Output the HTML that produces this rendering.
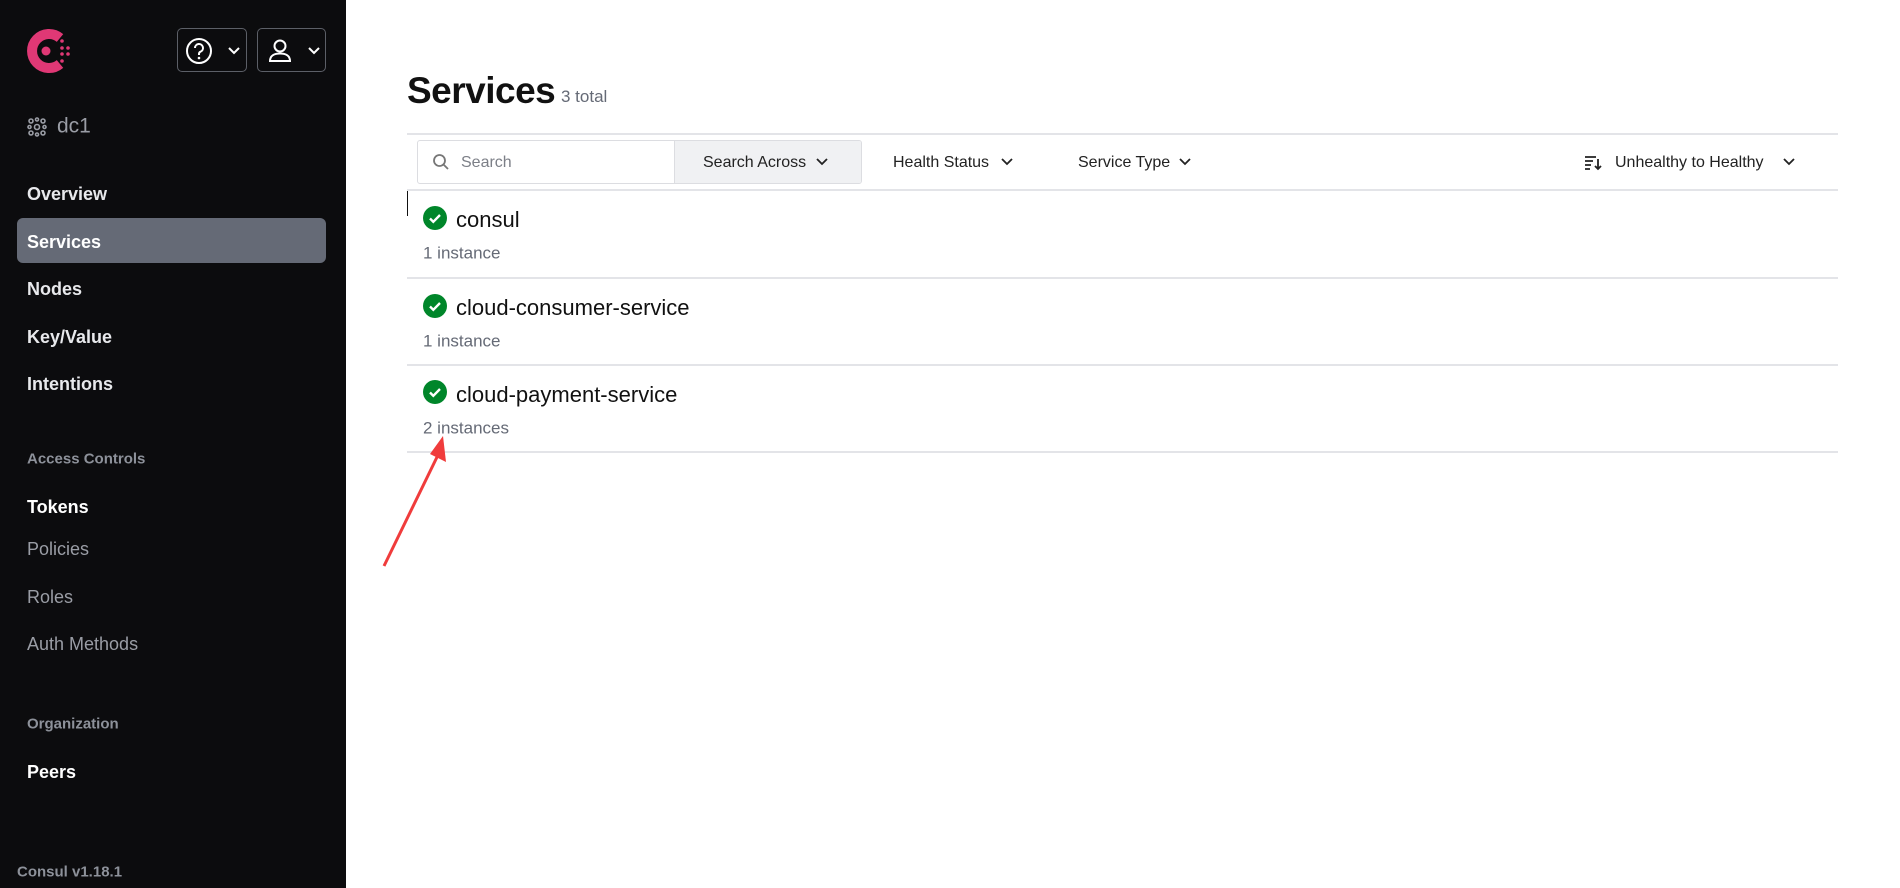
<!DOCTYPE html>
<html><head><meta charset="utf-8"><style>
*{margin:0;padding:0;box-sizing:border-box}
body{width:1900px;height:888px;overflow:hidden;background:#fff;font-family:"Liberation Sans",sans-serif;position:relative}
.sb{position:absolute;left:0;top:0;width:346px;height:888px;background:#0c0c0e}
.a{position:absolute;white-space:nowrap;line-height:1}
.nav{left:27px;font-size:18px;font-weight:bold;color:#e8e9ec;transform:translateY(-50%)}
.grey{font-weight:normal;color:#9a9da5}
.hd{left:27px;font-size:15px;font-weight:bold;color:#8d919a;transform:translateY(-50%)}
.btn{position:absolute;top:28px;height:44px;border:1px solid #5c5f67;border-radius:5px}
.line{position:absolute;left:407px;width:1431px;height:2px;background:#e3e4e8}
.name{left:456px;font-size:22px;color:#111;transform:translateY(-50%)}
.inst{left:423px;font-size:17px;color:#656a76;transform:translateY(-50%)}
.chk{position:absolute;left:423px;width:24px;height:24px}
.flt{font-size:16px;color:#222;transform:translateY(-50%);top:163px}
</style></head><body>
<div class="sb">
<svg style="position:absolute;left:25px;top:28px" width="46" height="46" viewBox="0 0 46 46">
<path d="M35 10 A17 17 0 1 0 35 36" fill="none" stroke="#e03875" stroke-width="10"/>
<circle cx="21" cy="23" r="4.5" fill="#e03875"/>
<g fill="#e03875"><circle cx="37" cy="13" r="1.8"/><circle cx="37" cy="20" r="1.8"/><circle cx="37" cy="26" r="1.8"/><circle cx="37" cy="33" r="1.8"/><circle cx="43" cy="20" r="1.8"/><circle cx="43" cy="26" r="1.8"/></g>
</svg>
<div class="btn" style="left:177px;width:70px">
<svg style="position:absolute;left:7px;top:8px" width="28" height="28" viewBox="0 0 28 28"><circle cx="14" cy="14" r="12" fill="none" stroke="#fff" stroke-width="2"/><path d="M10 11a4 4 0 1 1 5.5 3.7c-1 .4-1.5 1.2-1.5 2.3v1" fill="none" stroke="#fff" stroke-width="2"/><circle cx="14" cy="21" r="1.3" fill="#fff"/></svg>
<svg style="position:absolute;left:49px;top:17px" width="14" height="10" viewBox="0 0 14 10"><path d="M2 2l5 5 5-5" fill="none" stroke="#fff" stroke-width="2"/></svg>
</div>
<div class="btn" style="left:257px;width:69px">
<svg style="position:absolute;left:9px;top:8px" width="26" height="28" viewBox="0 0 26 28"><circle cx="13" cy="9" r="5.5" fill="none" stroke="#fff" stroke-width="2"/><path d="M3 24c0-5 4-7.5 10-7.5s10 2.5 10 7.5z" fill="none" stroke="#fff" stroke-width="2"/></svg>
<svg style="position:absolute;left:49px;top:17px" width="14" height="10" viewBox="0 0 14 10"><path d="M2 2l5 5 5-5" fill="none" stroke="#fff" stroke-width="2"/></svg>
</div>
<svg style="position:absolute;left:27px;top:117px" width="20" height="20" viewBox="0 0 20 20" fill="none" stroke="#9a9da5" stroke-width="1.6"><circle cx="10" cy="10" r="2.5"/><circle cx="4" cy="4" r="2"/><circle cx="16" cy="4" r="2"/><circle cx="4" cy="16" r="2"/><circle cx="16" cy="16" r="2"/><circle cx="10" cy="2.5" r="1.5"/><circle cx="10" cy="17.5" r="1.5"/><circle cx="2.5" cy="10" r="1.5"/><circle cx="17.5" cy="10" r="1.5"/></svg>
<div class="a" style="left:57px;top:126px;transform:translateY(-50%);font-size:21px;color:#9a9da5">dc1</div>
<div class="a nav" style="top:194px">Overview</div>
<div style="position:absolute;left:17px;top:218px;width:309px;height:45px;background:#656a76;border-radius:6px"></div>
<div class="a nav" style="top:242px;color:#fff">Services</div>
<div class="a nav" style="top:289px">Nodes</div>
<div class="a nav" style="top:337px">Key/Value</div>
<div class="a nav" style="top:384px">Intentions</div>
<div class="a hd" style="top:459px">Access Controls</div>
<div class="a nav" style="top:507px;color:#fff">Tokens</div>
<div class="a nav grey" style="top:549px">Policies</div>
<div class="a nav grey" style="top:597px">Roles</div>
<div class="a nav grey" style="top:644px">Auth Methods</div>
<div class="a hd" style="top:724px">Organization</div>
<div class="a nav" style="top:772px;color:#fff">Peers</div>
<div class="a hd" style="top:872px;left:17px;font-size:15px">Consul v1.18.1</div>
</div>

<div class="a" style="left:407px;top:72px;font-size:37px;font-weight:bold;color:#111;letter-spacing:-0.5px">Services</div>
<div class="a" style="left:561px;top:88px;font-size:17px;color:#656a76">3 total</div>
<div class="line" style="top:133px"></div>
<div style="position:absolute;left:417px;top:140px;width:445px;height:44px;border:1px solid #dcdde1;border-radius:3px;overflow:hidden">
<div style="position:absolute;left:256px;top:0;width:189px;height:44px;background:#f0f1f3;border-left:1px solid #dcdde1"></div>
</div>
<svg style="position:absolute;left:432px;top:153px" width="18" height="18" viewBox="0 0 18 18" fill="none" stroke="#777" stroke-width="1.8"><circle cx="7.5" cy="7.5" r="5.5"/><path d="M11.5 11.5l4.5 4.5"/></svg>
<div class="a flt" style="left:461px;color:#7c7f87">Search</div>
<div class="a flt" style="left:703px">Search Across</div>
<svg style="position:absolute;left:815px;top:157px" width="14" height="10" viewBox="0 0 14 10"><path d="M2 2l5 5 5-5" fill="none" stroke="#222" stroke-width="1.8"/></svg>
<div class="a flt" style="left:893px">Health Status</div>
<svg style="position:absolute;left:1000px;top:157px" width="14" height="10" viewBox="0 0 14 10"><path d="M2 2l5 5 5-5" fill="none" stroke="#222" stroke-width="1.8"/></svg>
<div class="a flt" style="left:1078px">Service Type</div>
<svg style="position:absolute;left:1178px;top:157px" width="14" height="10" viewBox="0 0 14 10"><path d="M2 2l5 5 5-5" fill="none" stroke="#222" stroke-width="1.8"/></svg>
<svg style="position:absolute;left:1584px;top:155px" width="18" height="16" viewBox="0 0 18 16" stroke="#222" stroke-width="1.8" fill="none"><path d="M1 2h11M1 6h8M1 10h6M1 14h5M14 4v10M11 11l3 3 3-3"/></svg>
<div class="a flt" style="left:1615px">Unhealthy to Healthy</div>
<svg style="position:absolute;left:1782px;top:157px" width="14" height="10" viewBox="0 0 14 10"><path d="M2 2l5 5 5-5" fill="none" stroke="#222" stroke-width="1.8"/></svg>
<div class="line" style="top:189px"></div>
<div style="position:absolute;left:407px;top:191px;width:1px;height:25px;background:#111"></div>

<svg class="chk" style="top:206px" viewBox="0 0 24 24"><circle cx="12" cy="12" r="12" fill="#00862a"/><path d="M7 12.5l3.3 3.3L17 9" fill="none" stroke="#fff" stroke-width="2.4"/></svg>
<div class="a name" style="top:220px">consul</div>
<div class="a inst" style="top:253px">1 instance</div>
<div class="line" style="top:277px"></div>
<svg class="chk" style="top:294px" viewBox="0 0 24 24"><circle cx="12" cy="12" r="12" fill="#00862a"/><path d="M7 12.5l3.3 3.3L17 9" fill="none" stroke="#fff" stroke-width="2.4"/></svg>
<div class="a name" style="top:308px">cloud-consumer-service</div>
<div class="a inst" style="top:341px">1 instance</div>
<div class="line" style="top:364px"></div>
<svg class="chk" style="top:380px" viewBox="0 0 24 24"><circle cx="12" cy="12" r="12" fill="#00862a"/><path d="M7 12.5l3.3 3.3L17 9" fill="none" stroke="#fff" stroke-width="2.4"/></svg>
<div class="a name" style="top:395px">cloud-payment-service</div>
<div class="a inst" style="top:428px">2 instances</div>
<div class="line" style="top:451px"></div>

<svg style="position:absolute;left:370px;top:425px" width="90" height="150" viewBox="370 425 90 150"><path d="M384 566 L438 455" stroke="#f03c3c" stroke-width="3" fill="none"/><path d="M443 436 L446 462 L430 454 Z" fill="#f03c3c"/></svg>
</body></html>
